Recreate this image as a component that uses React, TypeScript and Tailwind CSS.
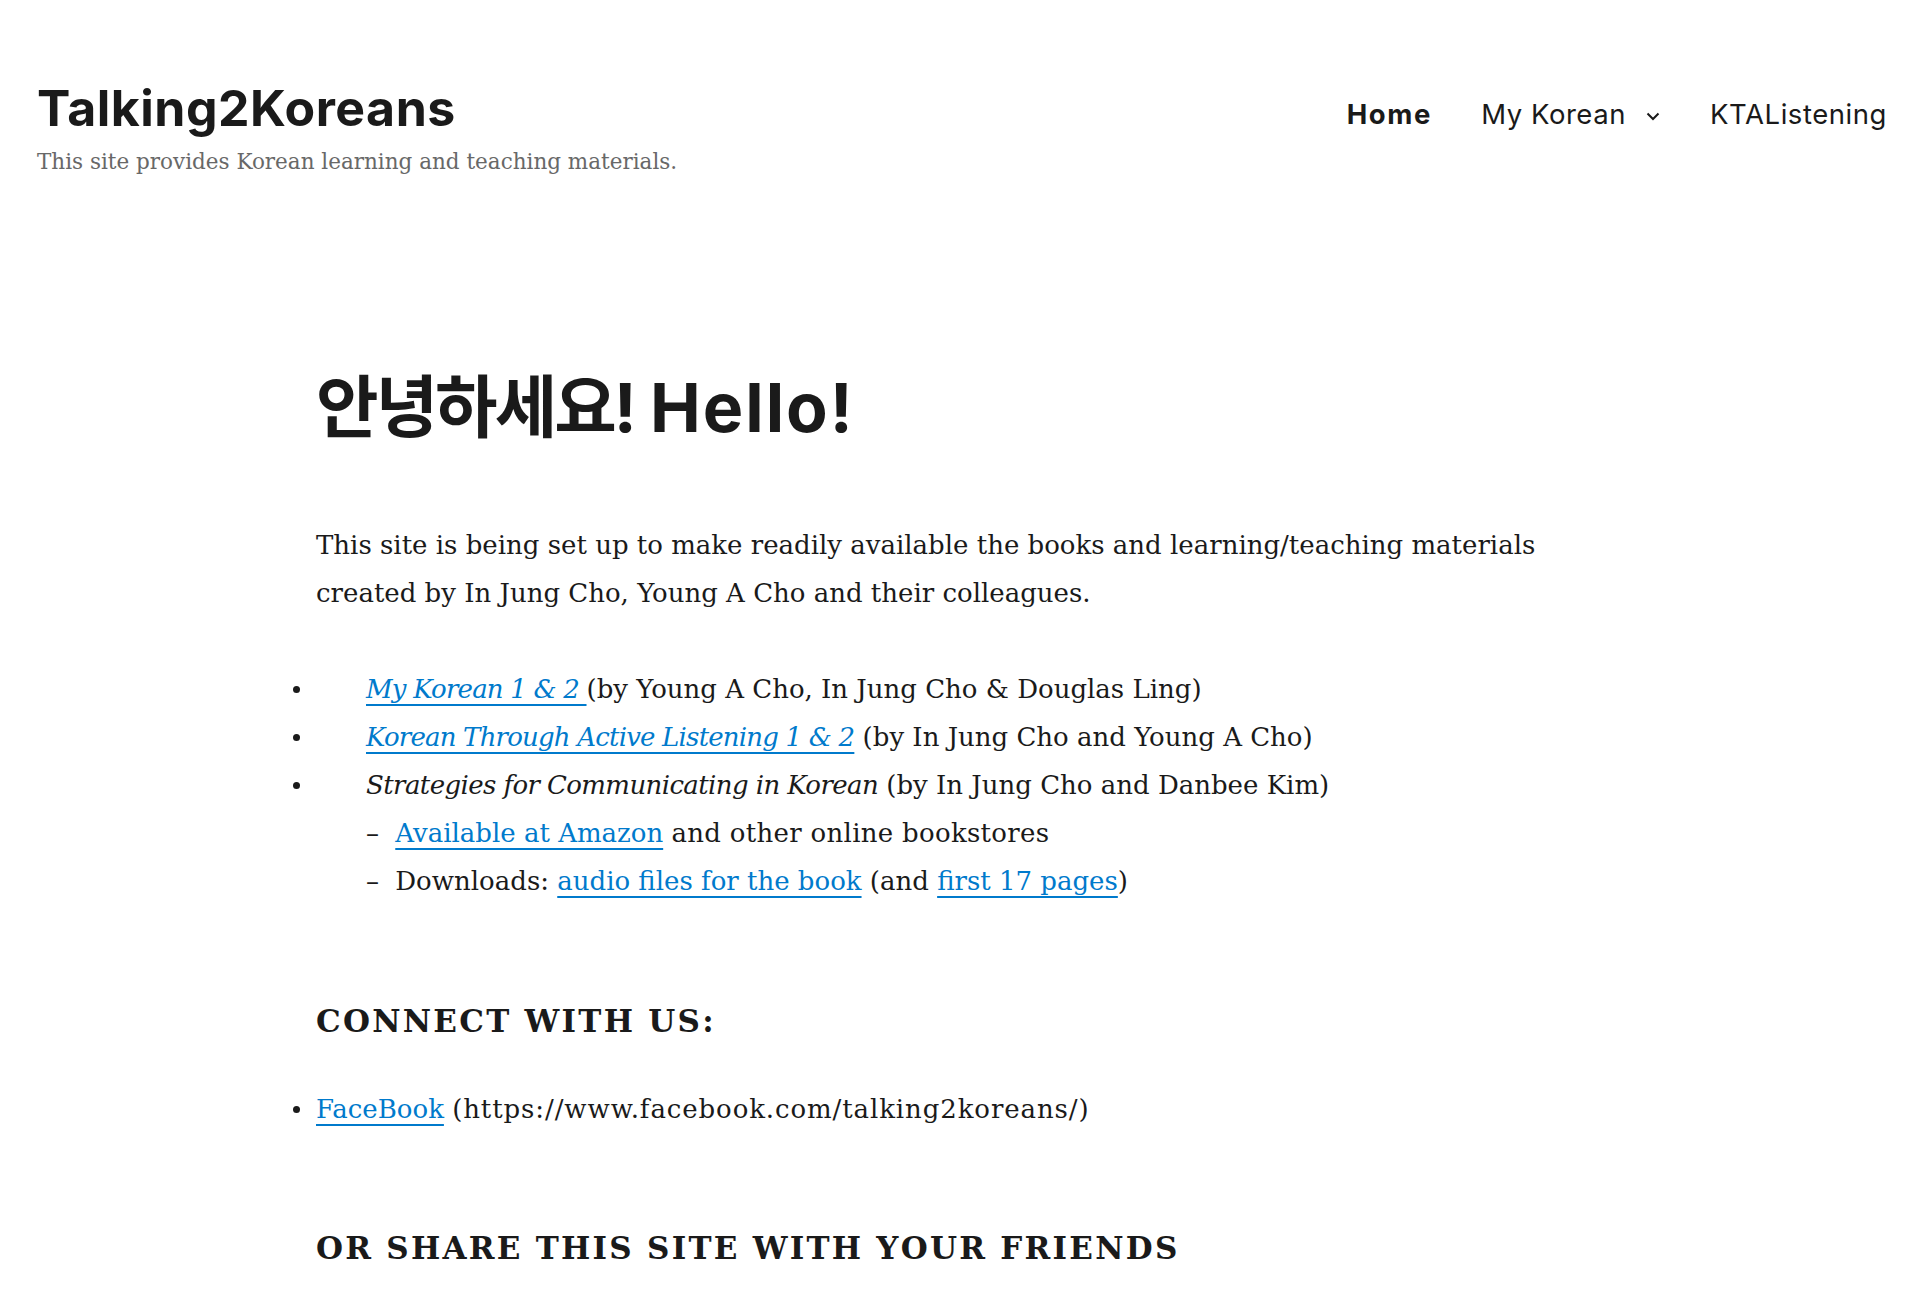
export default function App() {
  const serif = "font-['DejaVu_Serif',serif]";
  const link = "text-[#007acc] underline decoration-2 underline-offset-[6px]";
  const Dot = () => (
    <span className="absolute left-[-23px] top-[21px] h-[7px] w-[7px] rounded-full bg-[#1a1a1a]" />
  );
  return (
    <div className="min-h-[1304px] w-full bg-white text-[#1a1a1a]">
      <header className="flex items-start justify-between pl-[37px] pr-[33px] pt-[80px]">
        <div>
          <div className="font-['Inter',sans-serif] text-[50px] font-bold leading-[56px] tracking-[0.01em] text-[#1a1a1a]">
            Talking2Koreans
          </div>
          <div className={`${serif} mt-[11px] text-[21.5px] leading-[30px] text-[#686868]`}>
            This site provides Korean learning and teaching materials.
          </div>
        </div>
        <nav className="flex items-center pt-[19px] font-['Inter',sans-serif] text-[27.5px] leading-[30px] tracking-[0.02em] text-[#1a1a1a]">
          <span className="font-bold tracking-[0.06em]">Home</span>
          <span className="ml-[49px]">My Korean</span>
          <svg className="ml-[20px] mt-[4px]" width="14" height="9" viewBox="0 0 14 9" fill="none">
            <polyline points="1.5,1.5 7,7 12.5,1.5" stroke="#1a1a1a" strokeWidth="2" />
          </svg>
          <span className="ml-[50px]">KTAListening</span>
        </nav>
      </header>

      <main className={`${serif} ml-[316px] mt-[190px] w-[1300px] text-[26px] leading-[48px]`}>
        <h1 className="font-['Inter','Noto_Sans_CJK_KR',sans-serif] text-[68px] font-bold leading-[80px]">
          <span className="tracking-[-3px]">안녕하세요!</span>{" "}
          <span className="tracking-[2px]">Hello!</span>
        </h1>
        <p className="mt-[74px]">
          This site is being set up to make readily available the books and learning/teaching materials created by In
          Jung Cho, Young A Cho and their colleagues.
        </p>
        <ul className="mt-[48px]">
          <li className="relative pl-[50px]">
            <Dot />
            <a className={`${link} italic tracking-[-0.8px]`}>My Korean 1 &amp; 2 </a>(by Young A Cho, In Jung Cho
            &amp; Douglas Ling)
          </li>
          <li className="relative pl-[50px]">
            <Dot />
            <a className={`${link} italic tracking-[-0.8px]`}>Korean Through Active Listening 1 &amp; 2</a> (by In
            Jung Cho and Young A Cho)
          </li>
          <li className="relative pl-[50px]">
            <Dot />
            <em className="tracking-[-0.6px]">Strategies for Communicating in Korean</em> (by In Jung Cho and Danbee
            Kim)
            <br />
            <span className="mr-[8px]">–</span> <a className={link}>Available at Amazon</a>{" "}
            <span className="tracking-[0.3px]">and other online bookstores</span>
            <br />
            <span className="mr-[8px]">–</span> Downloads: <a className={link}>audio files for the book</a> (and{" "}
            <a className={link}>first 17 pages</a>)
          </li>
        </ul>
        <h4 className="mt-[92px] text-[31px] font-bold uppercase leading-[48px] tracking-[2.25px]">
          Connect with us:
        </h4>
        <ul className="mt-[40px]">
          <li className="relative">
            <Dot />
            <a className={link}>FaceBook</a>{" "}
            <span className="tracking-[0.9px]">(https://www.facebook.com/talking2koreans/)</span>
          </li>
        </ul>
        <h4 className="mt-[91px] text-[31px] font-bold uppercase leading-[48px] tracking-[2.25px]">
          Or share this site with your friends
        </h4>
      </main>
    </div>
  );
}
